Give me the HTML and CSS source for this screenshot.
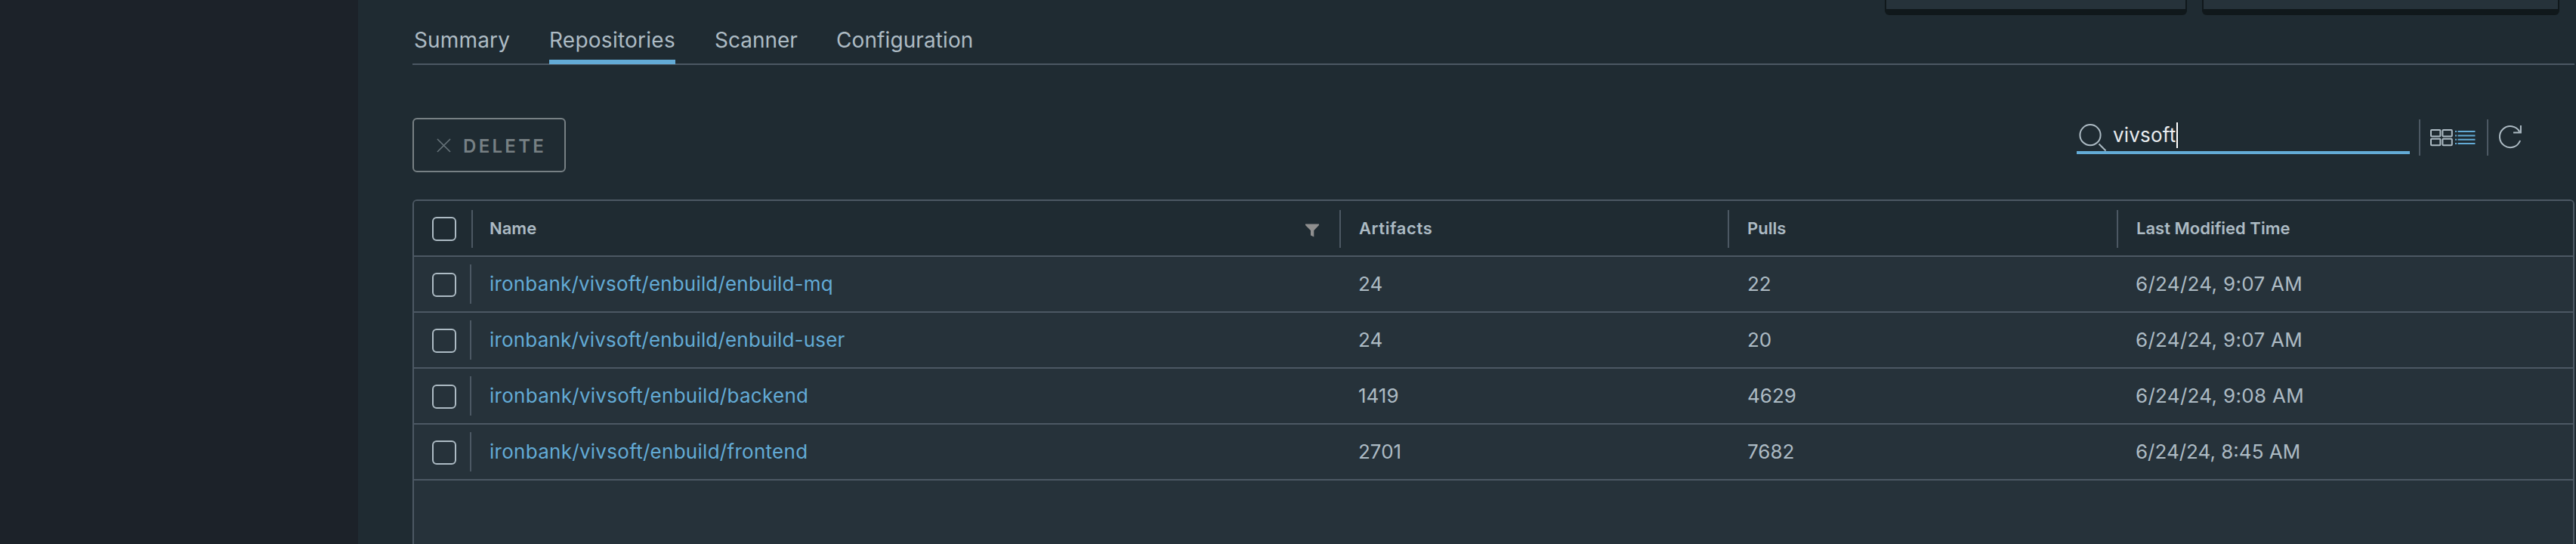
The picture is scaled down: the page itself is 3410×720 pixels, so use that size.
FILE: index.html
```
<!DOCTYPE html>
<html lang="en">
<head>
<meta charset="utf-8">
<title>Repositories</title>
<link rel="stylesheet" href="styles.css">
</head>
<body>
<div class="app">
  <aside class="sidebar"></aside>
  <main class="content">
    <div class="cards"><div class="card card-a"></div><div class="card card-b"></div></div>
    <nav class="tabs">
      <a class="tab summary">Summary</a>
      <a class="tab repositories active">Repositories</a>
      <a class="tab scanner">Scanner</a>
      <a class="tab configuration">Configuration</a>
    </nav>
    <div class="toolbar">
      <button class="delete" disabled>
        <svg width="19" height="19" viewBox="0 0 20 20"><path d="M1 1L19 19M19 1L1 19"/></svg>
        <span>DELETE</span>
      </button>
      <div class="tools">
        <div class="search">
          <svg class="magnifier" width="32" height="36" viewBox="0 0 32 36"><circle cx="15" cy="14.7" r="13.6"/><path d="M26.5 26.5L35.5 35.5"/></svg>
          <span class="query">vivsoft</span><i class="caret"></i>
        </div>
        <div class="views">
          <svg width="60" height="24" viewBox="0 0 60 24">
            <g class="grid-icon"><rect x="1" y="2" width="12.4" height="8.6" rx="1"/><rect x="16.4" y="2" width="12.4" height="8.6" rx="1"/><rect x="1" y="13.7" width="12.4" height="8.6" rx="1"/><rect x="16.4" y="13.7" width="12.4" height="8.6" rx="1"/></g>
            <path class="list-icon" d="M33 4h2M36.5 4h23M33 9.4h2M36.5 9.4h23M33 14.7h2M36.5 14.7h23M33 20h2M36.5 20h23"/>
          </svg>
        </div>
        <svg class="refresh" width="32" height="34" viewBox="0 0 32 34"><path d="M28.1 22A14 14 0 1 1 27.2 10.3M28.9 2V11.5H19"/></svg>
      </div>
    </div>
    <section class="grid">
      <div class="row head">
        <div class="check"><i></i></div>
        <div class="name"><span>Name</span><svg width="18" height="18" viewBox="0 0 18 18"><path d="M0 0.5H18V2L11.3 9V17.5L7 15.5V9L0 2Z"/></svg></div>
        <div class="col artifacts">Artifacts</div><div class="col">Pulls</div><div class="col">Last Modified Time</div>
      </div>
      <div class="row"><div class="check"><i></i></div><div class="name"><a>ironbank/vivsoft/enbuild/enbuild-mq</a></div><div class="col">24</div><div class="col">22</div><div class="col date">6/24/24, 9:07 AM</div></div>
      <div class="row"><div class="check"><i></i></div><div class="name"><a>ironbank/vivsoft/enbuild/enbuild-user</a></div><div class="col">24</div><div class="col">20</div><div class="col date">6/24/24, 9:07 AM</div></div>
      <div class="row"><div class="check"><i></i></div><div class="name"><a class="wide">ironbank/vivsoft/enbuild/backend</a></div><div class="col">1419</div><div class="col">4629</div><div class="col date">6/24/24, 9:08 AM</div></div>
      <div class="row"><div class="check"><i></i></div><div class="name"><a class="wide">ironbank/vivsoft/enbuild/frontend</a></div><div class="col">2701</div><div class="col">7682</div><div class="col date tight">6/24/24, 8:45 AM</div></div>
    </section>
  </main>
</div>
</body>
</html>
```
FILE: styles.css
```
* { box-sizing: border-box; }
body { margin: 0; background: #1f2b32; color: #adbbc4; font-family: Inter, "Noto Sans", sans-serif; font-size: 26px; }
.app { display: flex; width: 3410px; height: 720px; overflow: hidden; }
.sidebar { flex: none; width: 474px; background: #1c2229; }
.content { flex: none; width: 2936px; padding: 0 2px 0 72px; }
.cards { display: flex; justify-content: flex-end; gap: 20px; height: 20px; padding-right: 20px; }
.card { height: 20px; background: #26323a; border: solid #10181b; border-width: 0 2px 8px; border-radius: 0 0 6px 6px; }
.card-a { width: 400px; }
.card-b { width: 473px; }
.tabs { display: flex; gap: 52px; height: 66px; border-bottom: 2px solid #4c5863; font-size: 28px; }
.tab { height: 65px; padding-top: 16px; line-height: 34px; white-space: nowrap; }
.tab.active { border-bottom: 6px solid #63abd6; }
.summary { width: 129px; padding-left: 2px; letter-spacing: 0.15px; }
.repositories { width: 167px; letter-spacing: 0.25px; }
.scanner { width: 109px; }
.configuration { letter-spacing: 0.1px; }
.toolbar { display: flex; justify-content: space-between; height: 178px; padding: 70px 0 0; }
.delete { display: flex; align-items: center; gap: 16px; width: 203px; height: 72px; padding: 0 0 0 30px; border: 2px solid #778084; border-radius: 6px; background: none; color: #778084; font: 600 24px Inter, sans-serif; letter-spacing: 3.3px; }
.delete span { padding-top: 3px; }
.delete svg { flex: none; fill: none; stroke: #68747b; stroke-width: 1.6; }
.tools { display: flex; height: 50px; padding-right: 68px; }
.search { display: flex; width: 441px; height: 48px; border-bottom: 4px solid #63abd6; padding: 6px 0 0 3px; color: #e9ecef; }
.magnifier { flex: none; margin-top: 2px; }
svg { overflow: visible; fill: none; stroke: #adbbc4; stroke-width: 2; }
.query { margin-left: 13px; line-height: 34px; letter-spacing: 0.2px; }
.caret { width: 2px; height: 34px; margin-left: 1px; background: #fff; }
.views { width: 92px; height: 48px; margin: 2px 0 0 12px; padding: 11px 0 0 13px; border: solid #4c5863; border-width: 0 2px; }
.list-icon { stroke: #63abd6; }
.refresh { margin: 8px 0 0 14px; }
.grid { width: 2862px; height: 500px; border: 2px solid #4c5863; border-radius: 6px; background: #26323a; }
.row { display: grid; grid-template-columns: 76px 1149px 514px 515px 1fr; align-items: center; height: 74px; border-bottom: 2px solid #4c5863; }
.head { background: #1f2b32; border-radius: 4px 4px 0 0; font-size: 22px; font-weight: 600; }
.check { display: flex; align-items: center; width: 76px; height: 52px; padding-left: 24px; border-right: 2px solid #4c5863; }
.check i { width: 32px; height: 32px; margin-top: 2px; border: 2px solid #adbbc4; border-radius: 6px; }
.name { display: flex; justify-content: space-between; align-items: center; padding: 0 0 1px 24px; }
.name a { color: #63abd6; letter-spacing: 0.18px; }
.name a.wide { letter-spacing: 0.28px; }
.name svg { margin: 6px 27px 0 0; fill: #8f8f8f; stroke: none; }
.col { padding: 0 0 1px 25px; }
.col + .col { padding-left: 26px; }
.col.date { padding-left: 25px; letter-spacing: 0.3px; }
.col.date.tight { letter-spacing: 0; }
.head .check, .head .col { height: 50px; margin-top: 2px; line-height: 48px; }
.head .check { width: 78px; }
.head .check i { margin-top: 0; }
.head .col { padding-left: 24px; border-left: 2px solid #4c5863; }
.head .artifacts { letter-spacing: 0.6px; }
```
